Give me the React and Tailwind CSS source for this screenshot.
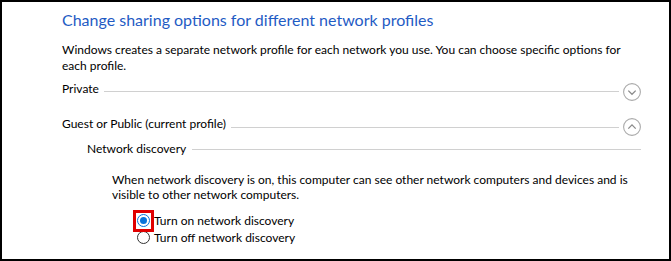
function Chevron({ up }) {
  return (
    <svg width="18" height="18" viewBox="0 0 18 18" className="shrink-0 mt-[1px]">
      <circle cx="9" cy="9" r="8.4" fill="none" stroke="#ababab" strokeWidth="1.1" />
      {up ? (
        <path d="M5.3 10.6 L9 6.9 L12.7 10.6" fill="none" stroke="#8a8a8a" strokeWidth="1.3" />
      ) : (
        <path d="M5.3 7.6 L9 11.3 L12.7 7.6" fill="none" stroke="#8a8a8a" strokeWidth="1.3" />
      )}
    </svg>
  );
}

export default function App() {
  return (
    <div
      className="w-[671px] h-[261px] border-2 border-black bg-white text-black text-[12px] overflow-hidden"
      style={{ fontFamily: 'Lato, "Noto Sans", sans-serif' }}
    >
      <div className="pl-[60px] pr-[28px] pt-[7px] flex flex-col">
        <div className="text-[16px] leading-[22px] h-[22px] text-[#1f5bc4] whitespace-nowrap">
          Change sharing options for different network profiles
        </div>
        <div className="mt-[11px] leading-[16px] whitespace-nowrap">
          Windows creates a separate network profile for each network you use. You can choose specific options for
          <br />
          each profile.
        </div>

        <div className="mt-[8px] h-[19px] flex items-start">
          <span className="leading-[13px] whitespace-nowrap">Private</span>
          <div className="flex-1 h-px bg-[#d0d0d0] mt-[9px] ml-[5px] mr-[4px]" />
          <Chevron />
        </div>

        <div className="mt-[16px] h-[19px] flex items-start">
          <span className="leading-[13px] whitespace-nowrap">Guest or Public (current profile)</span>
          <div className="flex-1 h-px bg-[#d0d0d0] mt-[10px] ml-[5px] mr-[4px]" />
          <Chevron up />
        </div>

        <div className="mt-[6px] h-[19px] flex items-start pl-[25px]">
          <span className="leading-[13px] whitespace-nowrap">Network discovery</span>
          <div className="flex-1 h-px bg-[#d0d0d0] mt-[7px] ml-[6px]" />
        </div>

        <div className="mt-[11px] pl-[50px] leading-[15px] whitespace-nowrap">
          When network discovery is on, this computer can see other network computers and devices and is
          <br />
          visible to other network computers.
        </div>

        <div className="mt-[10px] pl-[75px] flex flex-col">
          <label className="h-[17px] flex items-center leading-[17px] whitespace-nowrap">
            <span className="relative w-[13px] h-[13px] shrink-0">
              <span className="absolute inset-0 rounded-full border border-[#0a74da] bg-white flex items-center justify-center">
                <span className="w-[7px] h-[7px] rounded-full bg-[#0a74da]" />
              </span>
              <span className="absolute -left-[4px] -top-[4px] w-[21px] h-[22px] border-[3px] border-[#e00000]" />
            </span>
            <span className="ml-[4px]">Turn on network discovery</span>
          </label>
          <label className="h-[17px] flex items-center leading-[17px] whitespace-nowrap">
            <span className="w-[13px] h-[13px] shrink-0 rounded-full border border-[#333333] bg-white" />
            <span className="ml-[4px]">Turn off network discovery</span>
          </label>
        </div>
      </div>
    </div>
  );
}
